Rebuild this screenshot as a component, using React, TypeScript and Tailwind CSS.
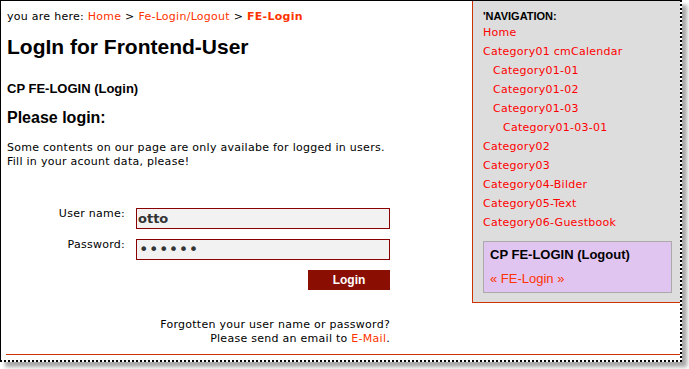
import React from "react";

const navLinks: { label: string; level: number }[] = [
  { label: "Home", level: 0 },
  { label: "Category01 cmCalendar", level: 0 },
  { label: "Category01-01", level: 1 },
  { label: "Category01-02", level: 1 },
  { label: "Category01-03", level: 1 },
  { label: "Category01-03-01", level: 2 },
  { label: "Category02", level: 0 },
  { label: "Category03", level: 0 },
  { label: "Category04-Bilder", level: 0 },
  { label: "Category05-Text", level: 0 },
  { label: "Category06-Guestbook", level: 0 },
];

const indent = ["pl-0", "pl-[10px]", "pl-[20px]"];

export default function App() {
  return (
    <div className="h-[369px] w-[689px] overflow-hidden bg-white font-['DejaVu_Sans',Verdana,sans-serif] tracking-[0.27px] text-black">
      <div className="flex h-[362px] w-[682px] flex-col border-b-2 border-l border-r-2 border-t border-black [border-bottom-style:dotted] [border-right-style:dotted] shadow-[5px_5px_4px_rgba(0,0,0,0.35)]">
        <div className="flex items-start">
          {/* Main column */}
          <main className="w-[471px] pl-[6px] pt-[9px]">
            <p className="text-[11px] leading-[14px]">
              you are here: <a className="text-[#ff3300]">Home</a> &gt;{" "}
              <a className="text-[#ff3300]">Fe-Login/Logout</a> &gt;{" "}
              <span className="font-bold text-[#ff3300]">FE-Login</span>
            </p>

            <h1 className="mt-[11px] font-['Liberation_Sans',Arial,sans-serif] text-[21px] font-bold leading-[24px] tracking-normal">
              LogIn for Frontend-User
            </h1>

            <h3 className="mt-[22px] font-['Liberation_Sans',Arial,sans-serif] text-[13px] font-bold leading-[16px] tracking-normal">
              CP FE-LOGIN (Login)
            </h3>

            <h2 className="mt-[11px] font-['Liberation_Sans',Arial,sans-serif] text-[16px] font-bold leading-[20px] tracking-normal">
              Please login:
            </h2>

            <p className="mt-[13px] text-[11px] leading-[14px]">
              Some contents on our page are only availabe for logged in users.
              <br />
              Fill in your acount data, please!
            </p>

            <form className="mt-[39px] flex w-[383px] flex-col gap-[10px]">
              <div className="flex items-start gap-[11px]">
                <label className="mt-[-1px] w-[118px] text-right text-[11px] leading-[14px]">
                  User name:
                </label>
                <input
                  readOnly
                  defaultValue="otto"
                  className="h-[21px] w-[254px] border border-[#8b0000] bg-[#f2f2f2] px-[1px] text-[13px] font-bold tracking-normal text-[#333] outline-none"
                />
              </div>
              <div className="flex items-start gap-[11px]">
                <label className="mt-[-1px] w-[118px] text-right text-[11px] leading-[14px]">
                  Password:
                </label>
                <input
                  readOnly
                  type="password"
                  defaultValue="secret"
                  className="h-[21px] w-[254px] border border-[#8b0000] bg-[#f2f2f2] px-[2px] text-[16px] tracking-[0.5px] text-[#333] outline-none"
                />
              </div>
              <div className="flex justify-end">
                <button
                  type="button"
                  className="h-[20px] w-[82px] bg-[#8a0e02] font-['Liberation_Sans',Arial,sans-serif] text-[12px] font-bold leading-[20px] tracking-normal text-white"
                >
                  Login
                </button>
              </div>
            </form>

            <p className="mt-[28px] w-[383px] text-right text-[11px] leading-[14px]">
              Forgotten your user name or password?
              <br />
              Please send an email to <a className="text-[#ff3300]">E-Mail</a>.
            </p>
          </main>

          {/* Sidebar */}
          <aside className="h-[302px] w-[208px] border-b border-l border-[#cc3300] bg-[#dddddd] pl-[10px] pt-[8px]">
            <div className="font-['Liberation_Sans',Arial,sans-serif] text-[11px] font-bold leading-[14px] tracking-normal">
              'NAVIGATION:
            </div>
            <ul className="text-[11px] leading-[19px] text-[#ff0000]">
              {navLinks.map((l) => (
                <li key={l.label} className={indent[l.level]}>
                  <a>{l.label}</a>
                </li>
              ))}
            </ul>
            <div className="mt-[9px] h-[52px] w-[189px] border border-[#aaaaaa] bg-[#e1c5f1] pl-[6px] pt-[5px] font-['Liberation_Sans',Arial,sans-serif] tracking-normal">
              <div className="text-[13px] font-bold leading-[16px]">
                CP FE-LOGIN (Logout)
              </div>
              <a className="mt-[8px] block text-[13px] leading-[16px] text-[#ff3300]">
                « FE-Login »
              </a>
            </div>
          </aside>
        </div>

        <div className="ml-[5px] mt-auto mb-[5px] h-px bg-[#cc3300]" />
      </div>
    </div>
  );
}
